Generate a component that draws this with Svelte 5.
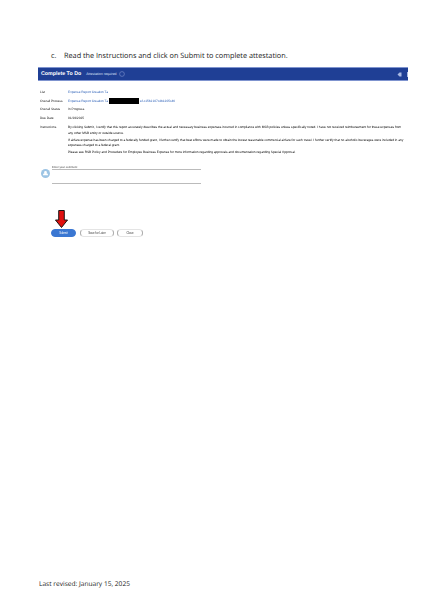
<script>
	const rows = [
		{ label: 'List', value: 'Expense Report Creation Ta', link: true },
		{ label: 'Overall Process', value: 'Expense Report Creation Ta', link: true, masked: true },
		{ label: 'Overall Status', value: 'In Progress' },
		{ label: 'Due Date', value: '01/29/2025' }
	];
</script>

<main class="page">
	<p class="step"><span class="marker">c.</span>Read the Instructions and click on Submit to complete attestation.</p>

	<section class="shot">
		<header class="banner">
			<strong>Complete To Do</strong>
			<span class="sub">Attestation required</span>
			<svg class="help" viewBox="0 0 10 10" width="6" height="6"><circle cx="5" cy="5" r="4" fill="none" stroke="#7f94cf" /></svg>
			<svg class="tool" viewBox="0 0 10 10" width="5" height="5"><path d="M1 5 5 1h4v8H5z" fill="#a9b9e2" /></svg>
			<span class="edge"></span>
		</header>

		<dl class="details">
			{#each rows as row}
				<div class="row">
					<dt>{row.label}</dt>
					<dd class:link={row.link}>
						{row.value}
						{#if row.masked}<span class="mask"></span><span>ef-c1562107c4b1205c46</span>{/if}
					</dd>
				</div>
			{/each}
			<div class="row instructions">
				<dt>Instructions</dt>
				<dd>
					<p>By clicking Submit, I certify that this report accurately describes the actual and necessary business expenses incurred in compliance with MSB policies unless specifically noted. I have not received reimbursement for these expenses from<br />any other MSB entity or outside source.</p>
					<p>If airfare expense has been charged to a federally funded grant, I further certify that best efforts were made to obtain the lowest reasonable commercial airfare for such travel. I further certify that no alcoholic beverages were included in any<br />expenses charged to a federal grant.</p>
					<p>Please see RSB Policy and Procedure for Employee Business Expense for more information regarding approvals and documentation regarding Special Approval.</p>
				</dd>
			</div>
		</dl>

		<div class="comment">
			<svg class="avatar" viewBox="0 0 16 16" width="9" height="9">
				<circle cx="8" cy="8" r="8" fill="#9cc4e4" />
				<path d="M3.5 11a4.500 4.500 0 0 1 9 0z M5.500 6a2.500 2.500 0 0 1 5 0 2.500 2.500 0 0 1-5 0" fill="#fff" />
			</svg>
			<div class="field">
				<span>Enter your comment</span>
				<div class="box"></div>
			</div>
		</div>

		<div class="actions">
			<div class="submit-wrap">
				<svg class="arrow" viewBox="0 0 14 18" width="13" height="18" preserveAspectRatio="none">
					<path d="M4 .5h6v9.500h3.500L7 17.500.5 10H4z" fill="#e01010" stroke="#111" />
				</svg>
				<button class="primary">Submit</button>
			</div>
			<button class="ghost save">Save for Later</button>
			<button class="ghost close">Close</button>
		</div>
	</section>

	<footer>Last revised: January 15, 2025</footer>
</main>

<style>
	:global(body) {
		background: #fff;
	}

	.page {
		width: 423px;
		height: 598px;
		box-sizing: border-box;
		padding-top: 51px;
		display: flex;
		flex-direction: column;
		font-family: 'Open Sans', sans-serif;
		text-rendering: geometricPrecision;
		overflow: hidden;
	}

	.step {
		margin: 0 0 6px 51px;
		font-size: 7.3px;
		line-height: 10px;
		color: #1a1a1a;
	}

	.marker {
		display: inline-block;
		width: 13px;
	}

	.shot {
		margin-left: 38px;
		width: 370px;
		flex: 1;
		filter: blur(0.25px);
	}

	.banner {
		height: 14px;
		background: #1f3f95;
		border-top: 1px solid #7f94cf;
		border-bottom: 1px solid #7f94cf;
		box-sizing: border-box;
		display: flex;
		align-items: center;
		gap: 5px;
		padding: 0 0 0 3px;
		color: #fff;
		font-family: 'Liberation Sans', sans-serif;
	}

	.banner strong {
		font-size: 5.3px;
	}

	.sub {
		font-size: 3.5px;
		color: #dbe3f6;
	}

	.help {
		margin-left: -3px;
	}

	.tool {
		margin-left: auto;
	}

	.edge {
		width: 1px;
		height: 5px;
		background: #a9b9e2;
	}

	.details {
		margin: 7px 0 0;
		font-family: 'Liberation Sans', sans-serif;
		font-size: 3.2px;
		color: #222;
	}

	.row {
		display: flex;
		height: 8.600px;
		align-items: center;
	}

	dt {
		width: 30px;
		flex: none;
		padding-left: 2px;
		box-sizing: border-box;
	}

	dd {
		margin: 0;
		display: flex;
		align-items: center;
		gap: 1px;
	}

	.link {
		color: #2f62b8;
	}

	.mask {
		display: inline-block;
		width: 30px;
		height: 6px;
		background: #000;
	}

	.instructions {
		height: auto;
		align-items: flex-start;
		margin-top: 3px;
	}

	.instructions dd {
		display: block;
		width: 340px;
		color: #000;
		line-height: 5.400px;
		white-space: nowrap;
	}

	.instructions p {
		margin: 0 0 1.500px;
	}

	.comment {
		display: flex;
		align-items: flex-start;
		gap: 2px;
		margin: 10px 0 0 3px;
	}

	.avatar {
		margin-top: 2px;
	}

	.field {
		width: 149px;
		font-family: 'Liberation Sans', sans-serif;
		font-size: 2.800px;
		line-height: 1px;
		color: #333;
	}

	.box {
		height: 13px;
		margin-top: 1px;
		border-top: 1px solid #bbb;
		border-bottom: 1px solid #bbb;
	}

	.actions {
		display: flex;
		align-items: flex-end;
		gap: 4px;
		margin: 26px 0 0 13px;
	}

	.submit-wrap {
		display: flex;
		flex-direction: column;
		align-items: center;
		gap: 1px;
	}

	.arrow {
		margin-right: 5px;
	}

	button {
		height: 8px;
		padding: 0;
		border-radius: 4px;
		font-family: 'Liberation Sans', sans-serif;
		font-size: 2.800px;
		color: #333;
		background: #fff;
		border: 0.6px solid #aaa;
	}

	.primary {
		width: 25px;
		background: #3a77d2;
		border-color: #3a77d2;
		color: #fff;
	}

	.ghost {
		border-top-color: #e4e4e4;
		border-bottom-color: #e4e4e4;
	}

	.save {
		width: 34px;
	}

	.close {
		width: 26px;
		margin-left: -1px;
	}

	footer {
		margin: 0 0 9px 39px;
		font-size: 6.600px;
		line-height: 10px;
		color: #222;
	}
</style>
